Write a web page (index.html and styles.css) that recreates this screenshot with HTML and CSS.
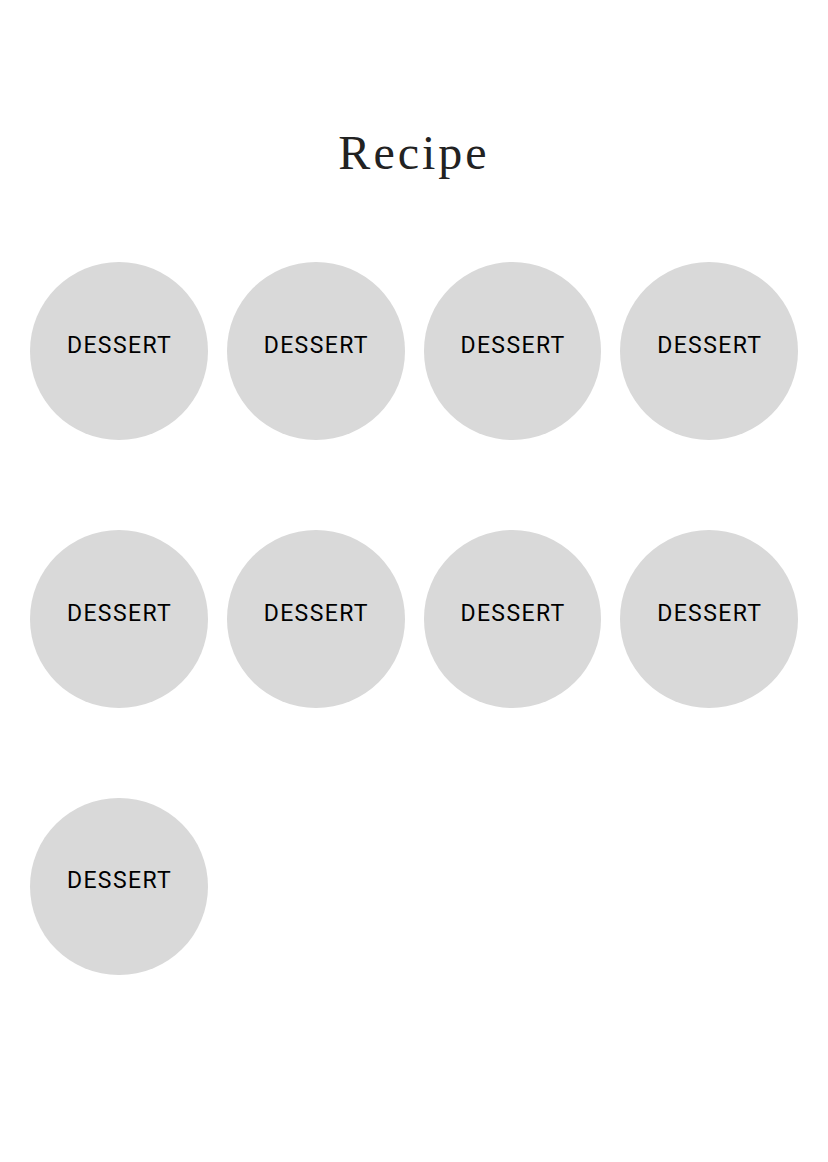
FILE: index.html
```html
<!DOCTYPE html>
<html lang="en">
<head>
  <meta charset="UTF-8" />
  <meta name="viewport" content="width=device-width, initial-scale=1.0"/>
  <title>Recipe</title>
  <link rel="stylesheet" href="styles.css">
</head>
<body>
  <main class="page">
    <h1 class="title">Recipe</h1>

    <div class="categories">
      <a href="#" class="category">DESSERT</a>
      <a href="#" class="category">DESSERT</a>
      <a href="#" class="category">DESSERT</a>
      <a href="#" class="category">DESSERT</a>
      <a href="#" class="category">DESSERT</a>
      <a href="#" class="category">DESSERT</a>
      <a href="#" class="category">DESSERT</a>
      <a href="#" class="category">DESSERT</a>
      <a href="#" class="category">DESSERT</a>
    </div>
  </main>
</body>
</html>
```

FILE: styles.css
```css
body {
  margin: 0;
  padding: 0;
  background: #fff;
  color: #000;
  font-family: Roboto, "Liberation Sans", Arial, sans-serif;
}

.page {
  padding: 124px 30px 60px;
}

.title {
  margin: 0 0 80px;
  text-align: center;
  font-family: "Liberation Serif", "Times New Roman", serif;
  font-weight: 400;
  font-size: 48px;
  line-height: 58px;
  letter-spacing: 3px;
  color: #222;
}

.categories {
  display: grid;
  grid-template-columns: repeat(4, 1fr);
  column-gap: 19px;
  row-gap: 90px;
}

.category {
  display: flex;
  justify-content: center;
  align-items: center;
  aspect-ratio: 1 / 1;
  padding-bottom: 11px;
  box-sizing: border-box;
  border-radius: 50%;
  background: #d9d9d9;
  color: #000;
  text-decoration: none;
  font-size: 23px;
  letter-spacing: 1.4px;
  text-indent: 1.4px;
}
```
